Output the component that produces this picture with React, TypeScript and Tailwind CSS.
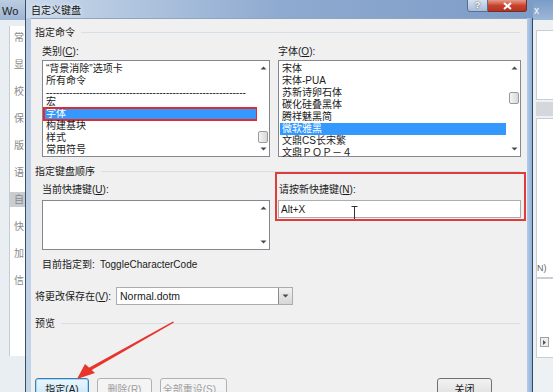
// 自定义键盘 dialog (Word, Windows 7 style) with red annotation marks on top
import type { ReactNode } from 'react';

const FONT = "font-['Liberation_Sans','Noto_Sans_CJK_SC',sans-serif]";

const leftItems = ['“背景消除”选项卡', '所有命令', 'DASH', '宏', '字体', '构建基块', '样式', '常用符号'];
const rightItems = ['宋体', '宋体-PUA', '苏新诗卵石体', '碳化硅叠黑体', '腾祥魅黑简', '微软雅黑', '文鼎CS长宋繁', '文鼎ＰＯＰ－４'];

function UpArrow() {
  return (
    <svg width="7" height="4" viewBox="0 0 7 4">
      <path d="M0.5 3.5 L3.5 0.5 L6.5 3.5 Z" fill="#4a4a4a" />
    </svg>
  );
}

function DownArrow() {
  return (
    <svg width="7" height="4" viewBox="0 0 7 4">
      <path d="M0.5 0.5 L3.5 3.5 L6.5 0.5 Z" fill="#4a4a4a" />
    </svg>
  );
}

// 列表框右侧的竖向滚动条,thumbTop 为滑块相对顶部的偏移
function ScrollBar({ thumbTop, showThumb = true }: { thumbTop: number; showThumb?: boolean }) {
  return (
    <div className="relative w-[12px] flex flex-col items-center justify-between py-[5px] bg-white">
      <UpArrow />
      <DownArrow />
      {showThumb && (
        <div
          className="absolute left-[1px] w-[10px] h-[12px] rounded-[2px] border border-[#9a9a9a] bg-gradient-to-r from-[#f4f4f4] to-[#d8d8d8]"
          style={{ top: thumbTop }}
        />
      )}
    </div>
  );
}

function GroupHeader({ label }: { label: string }) {
  return (
    <div className="flex items-center h-[12px] pr-[7px]">
      <span className="whitespace-nowrap">{label}</span>
      <div className="flex-1 h-px bg-[#d5dfe5] ml-[6px]" />
    </div>
  );
}

function Btn({ children, focus, disabled, w }: { children: ReactNode; focus?: boolean; disabled?: boolean; w: string }) {
  return (
    <div
      className={`${w} h-[22px] rounded-[3px] border flex items-start justify-center pt-[3px] ${
        focus
          ? 'border-[#3c7fb1] bg-gradient-to-b from-[#eaf6fd] to-[#c4e5f6] shadow-[inset_0_0_0_1px_#a6d8f5]'
          : disabled
            ? 'border-[#adb2b5] bg-[#f4f4f4] text-[#a0a0a0]'
            : 'border-[#707070] bg-gradient-to-b from-[#f2f2f2] to-[#dddddd]'
      }`}
    >
      {children}
    </div>
  );
}

export default function App() {
  return (
    <div className={`${FONT} relative w-[553px] h-[392px] overflow-hidden flex text-[10px] text-[#1a1a1a] bg-[#dfe6ee]`}>
      {/* 背后的 Word 窗口(左侧露出的一条) */}
      <div className="w-[25px] shrink-0 flex flex-col overflow-hidden">
        <div className="h-[20px] bg-gradient-to-b from-[#bccde2] to-[#9db5d4] pl-[2px] pt-[3px] text-[11px] text-[#222]">Wo</div>
        <div className="flex-1 flex bg-[#e9eef3] pt-[6px] pb-[36px]">
          <div className="w-[10px] border-r border-[#c6ccd2]" />
          <div className="flex-1 bg-white flex flex-col gap-[12px] pt-[4px] pl-[4px] text-[#8a8a8a]">
            <span>常</span>
            <span>显</span>
            <span>校</span>
            <span>保</span>
            <span>版</span>
            <span>语</span>
            <span className="-ml-[4px] pl-[4px] bg-[#c9cdd1]">自</span>
            <span>快</span>
            <span>加</span>
            <span>信</span>
          </div>
        </div>
      </div>

      {/* 对话框 */}
      <div className="w-[508px] shrink-0 flex flex-col border-l border-[#3b4d63]">
        {/* 标题栏 */}
        <div className="h-[20px] flex bg-gradient-to-r from-[#c9d9ea] via-[#8faad0] to-[#7d9cc8]">
          <div className="pl-[5px] pt-[3px] text-[10px] text-[#111] [text-shadow:0_0_4px_#fff]">自定义键盘</div>
          <div className="flex-1" />
          <div className="w-[21px] h-[13px] mt-[-1px] rounded-bl-[3px] border border-[#57708f] bg-gradient-to-b from-[#d7e2ef] to-[#a9bdd6] text-[9px] text-white font-bold text-center leading-[11px] [text-shadow:0_0_2px_#333]">?</div>
          <div className="w-[39px] h-[13px] mt-[-1px] rounded-br-[3px] border border-l-0 border-[#6d2f2a] bg-gradient-to-b from-[#e59a89] via-[#c8432d] to-[#b8321f] flex items-center justify-center">
            <svg width="9" height="8" viewBox="0 0 9 8">
              <path d="M1 1 L8 7 M8 1 L1 7" stroke="#fff" strokeWidth="2" />
            </svg>
          </div>
          <div className="w-[6px]" />
        </div>

        <div className="flex-1 flex">
          <div className="w-[5px] bg-gradient-to-b from-[#b8cbe2] to-[#c5d5e8]" />
          {/* 客户区 */}
          <div className="relative flex-1 bg-[#f0f0f0] pt-[7px] pl-[4px] flex flex-col border-t border-[#8ea5c2]">
            <GroupHeader label="指定命令" />
            <div className="pl-[7px] pr-[6px]">
              <div className="flex gap-[8px] mt-[7px] h-[12px] items-center">
                <span className="w-[228px]">类别(<u>C</u>):</span>
                <span>字体(<u>O</u>):</span>
              </div>
              <div className="flex gap-[8px] mt-[3px]">
                <div className="w-[228px] h-[97px] border border-[#828790] bg-white flex">
                  <div className="flex-1 flex flex-col pt-[2px] pl-[1px]">
                    {leftItems.map((t) =>
                      t === 'DASH' ? (
                        <div key={t} className="h-[12.2px] overflow-hidden whitespace-nowrap pl-[2px] pr-[6px] leading-[12px]">
                          {'-'.repeat(60)}
                        </div>
                      ) : (
                        <div
                          key={t}
                          className={`h-[12.2px] leading-[12px] pl-[2px] whitespace-nowrap ${
                            t === '字体' ? 'bg-[#3399ff] text-white outline-2 outline-[#e32b2b] -outline-offset-1' : ''
                          }`}
                        >
                          {t}
                        </div>
                      ),
                    )}
                  </div>
                  <ScrollBar thumbTop={70} />
                </div>
                <div className="flex-1 h-[97px] border border-[#828790] bg-white flex">
                  <div className="flex-1 flex flex-col pt-[2px] pl-[1px] pr-[2px]">
                    {rightItems.map((t) => (
                      <div
                        key={t}
                        className={`h-[12.2px] leading-[12px] pl-[2px] whitespace-nowrap ${t === '微软雅黑' ? 'bg-[#3399ff] text-white' : ''}`}
                      >
                        {t}
                      </div>
                    ))}
                  </div>
                  <ScrollBar thumbTop={31} />
                </div>
              </div>
            </div>

            <div className="mt-[8px]">
              <GroupHeader label="指定键盘顺序" />
            </div>
            <div className="pl-[7px] pr-[6px] flex gap-[8px] mt-[7px]">
              <div className="w-[228px] flex flex-col">
                <span className="h-[12px] leading-[12px]">当前快捷键(<u>U</u>):</span>
                <div className="mt-[4px] h-[50px] border border-[#828790] bg-white flex">
                  <div className="flex-1" />
                  <ScrollBar thumbTop={0} showThumb={false} />
                </div>
              </div>
              <div className="relative flex-1 flex flex-col">
                <span className="h-[12px] leading-[12px] pl-[1px]">请按新快捷键(<u>N</u>):</span>
                <div className="mt-[4px] h-[18px] border border-[#abadb3] bg-white flex items-center pl-[2px] text-[10px]">Alt+X</div>
                {/* I 形光标 */}
                <svg className="absolute left-[73px] top-[22px]" width="7" height="14" viewBox="0 0 7 14">
                  <path d="M0.5 0.5 H6.5 M3.5 0.5 V13.5 M0.5 13.5 H6.5" stroke="#333" strokeWidth="1" fill="none" />
                </svg>
                {/* 红色标注框 */}
                <div className="absolute -left-[3px] -top-[12px] -right-[5px] h-[49px] border-2 border-[#e03c3c] pointer-events-none" />
              </div>
            </div>

            <div className="pl-[7px] mt-[9px] h-[12px] leading-[12px] flex">
              <span className="w-[58px]">目前指定到:</span>
              <span>ToggleCharacterCode</span>
            </div>

            <div className="mt-[16px] flex items-center h-[18px]">
              <span className="w-[81px]">将更改保存在(<u>V</u>):</span>
              <div className="w-[177px] h-[18px] border border-[#abadb3] bg-white flex">
                <span className="flex-1 pl-[3px] leading-[16px] text-[10.5px]">Normal.dotm</span>
                <div className="w-[14px] border-l border-[#8a8a8a] bg-gradient-to-b from-[#f2f2f2] to-[#d6d6d6] flex items-center justify-center">
                  <DownArrow />
                </div>
              </div>
            </div>

            <div className="mt-[12px]">
              <GroupHeader label="预览" />
            </div>

            <div className="mt-[49px] flex gap-[8px] pr-[35px]">
              <Btn w="w-[54px]" focus>指定(A)</Btn>
              <Btn w="w-[55px]" disabled>删除(R)</Btn>
              <Btn w="w-[67px]" disabled>全部重设(S)...</Btn>
              <div className="flex-1" />
              <Btn w="w-[55px]">关闭</Btn>
            </div>
          </div>
          <div className="w-[6px] bg-gradient-to-r from-[#b4cce6] to-[#8fb1da] border-r border-[#33465e]" />
        </div>
      </div>

      {/* 背后窗口(右侧露出的一条) */}
      <div className="flex-1 flex flex-col overflow-hidden">
        <div className="h-[20px] bg-gradient-to-b from-[#7a9cc8] to-[#9db7d6] text-white text-[10px] pl-[1px] pt-[3px]">x</div>
        <div className="flex-1 bg-[#eef1f4] pl-[3px] pt-[10px] flex flex-col">
          <div className="h-[70px] bg-white border border-[#c9ced4] border-r-0" />
          <div className="h-[14px] mt-[2px] bg-[#d4d8dc]" />
          <div className="h-[160px] mt-[2px] bg-white border border-[#c9ced4] border-r-0 flex flex-col justify-end">
            <span className="text-[9px] text-[#666] mb-[2px]">N)</span>
          </div>
          <div className="h-[80px] bg-white border border-[#c9ced4] border-r-0 pt-[58px] pl-[3px]">
            <div className="w-[9px] h-[10px] border border-[#a0a0a0] bg-[#eee] flex items-center justify-center">
              <svg width="3" height="5" viewBox="0 0 3 5"><path d="M0 0 L3 2.5 L0 5 Z" fill="#555" /></svg>
            </div>
          </div>
        </div>
      </div>

      {/* 红色箭头标注 */}
      <svg className="absolute left-0 top-0 pointer-events-none" width="553" height="392" viewBox="0 0 553 392">
        <path d="M173 321.5 L174 322.5 L90 371 L88.5 368 Z" fill="#e8342b" />
        <path d="M77 379 L85 364 L95 373 Z" fill="#e8342b" />
      </svg>
    </div>
  );
}
